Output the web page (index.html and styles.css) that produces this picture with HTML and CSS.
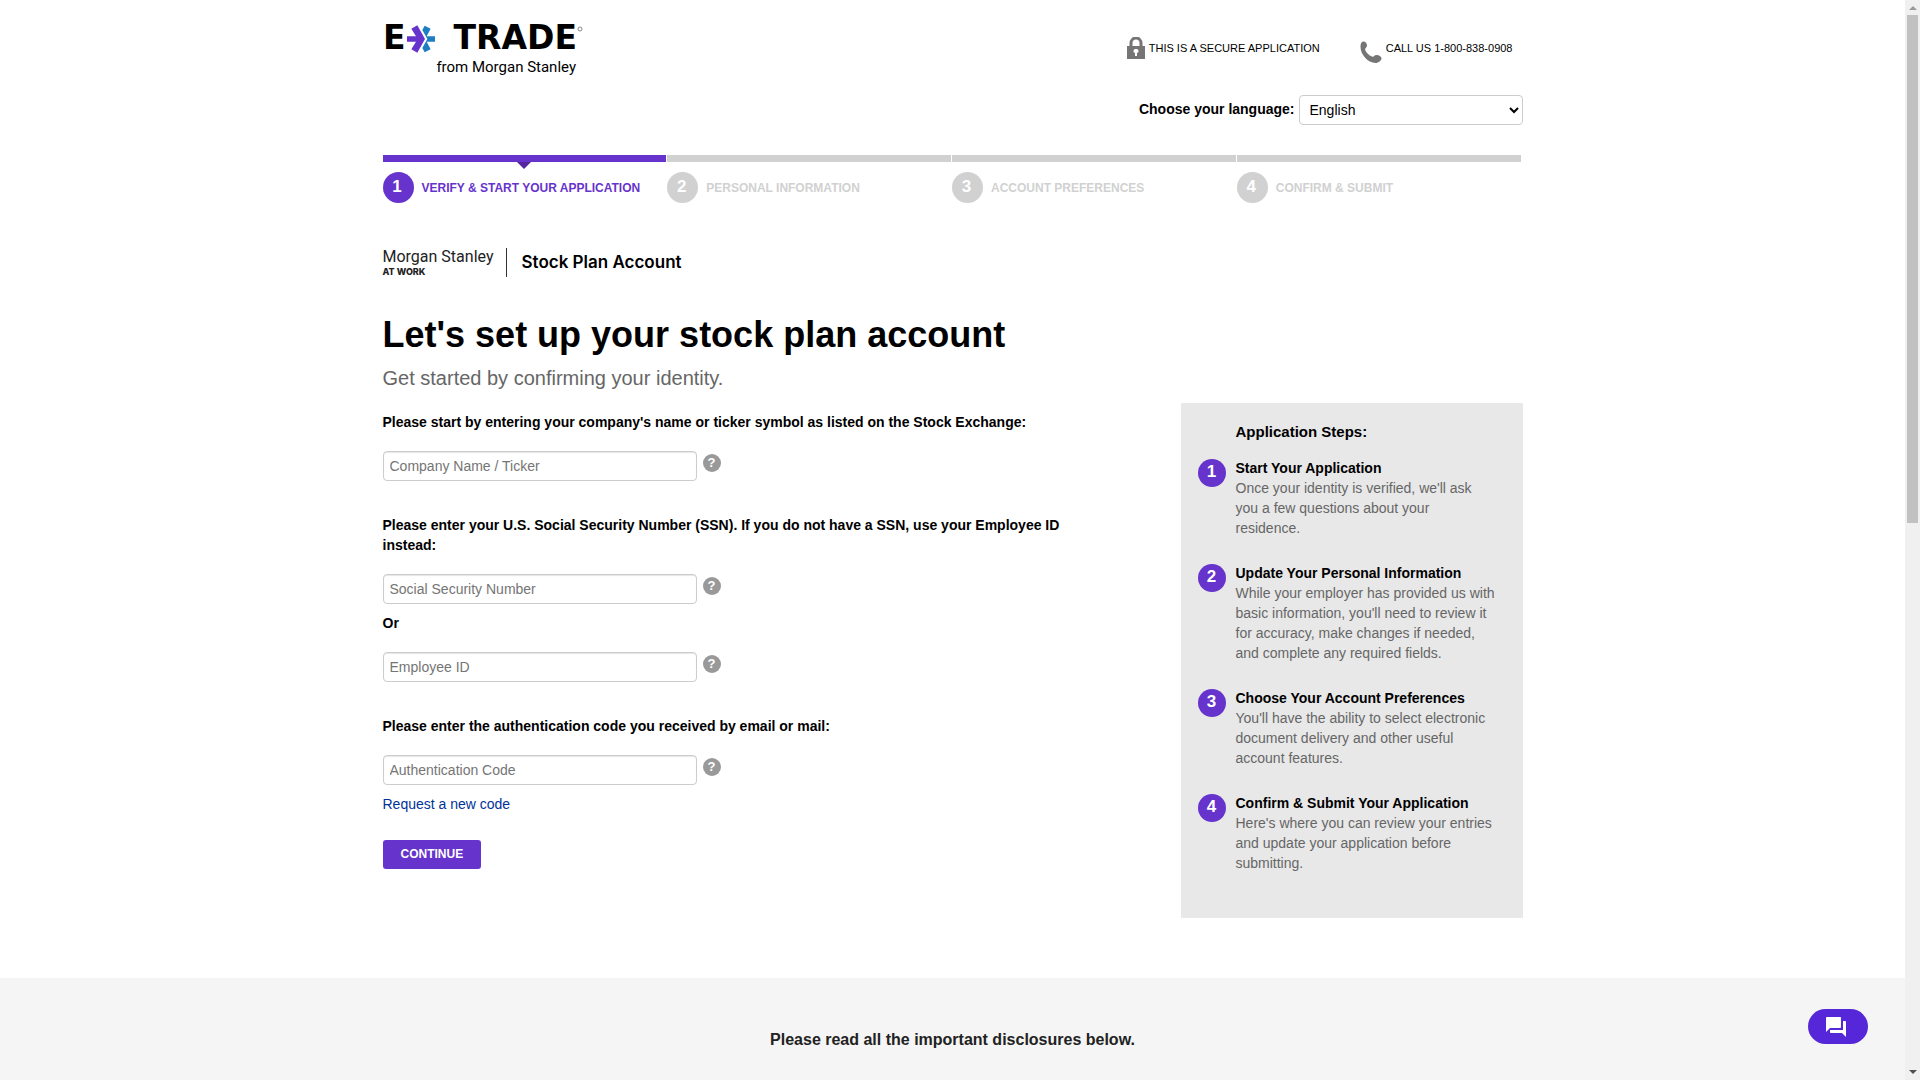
FILE: index.html
```
<!DOCTYPE html>
<html lang="en">
<head>
  <meta charset="UTF-8" />
  <meta name="viewport" content="width=device-width, initial-scale=1.0"/>
  <title>Stock Plan Account - E*TRADE from Morgan Stanley</title>
  <link rel="stylesheet" href="styles.css">
</head>
<body>
  <div class="page">
    <div class="container">
      <header class="header">
        <a class="logo" href="#" aria-label="E*TRADE from Morgan Stanley">
          <svg width="206" height="67" viewBox="0 -13 206 67">
            <text class="logo-word" x="0" y="26">E</text>
            <svg x="24" y="2" width="28" height="28" viewBox="0 0 84 82">
              <path fill="#6633cc" d="M13 10 31 0 54 41 31 82 13 72 27 49H0V33H27Z"/>
              <path fill="#1c7fc4" d="M53 1 71 10 59 33H84V49H59L71 72 53 81 46 68 61 41 46 14Z"/>
            </svg>
            <text class="logo-word" x="194" y="26" text-anchor="end">TRADE</text>
            <circle cx="197" cy="6" r="2" fill="none" stroke="#888"/>
            <text class="logo-from" x="193" y="49" text-anchor="end">from Morgan Stanley</text>
          </svg>
        </a>
        <div class="header-right">
          <div class="header-info">
            <span class="info-item">
              <svg width="18" height="22" viewBox="0 0 18 22">
                <path fill="none" stroke="#757575" stroke-width="3" d="M4 10V6a5 5 0 0 1 10 0v4"/>
                <rect y="9" width="18" height="13" fill="#757575"/>
                <path fill="#fff" d="M9 12a2 2 0 0 1 1 4v3H8v-3a2 2 0 0 1 1-4Z"/>
              </svg>
              THIS IS A SECURE APPLICATION
            </span>
            <a class="info-item info-phone" href="tel:18008380908">
              <svg width="22" height="22" viewBox="0 0 22 22">
                <path fill="#757575" d="M3 .5C5 0 7 2 7 4.500c0 2-2 2.500-2 4 1 3 4 6 7 7 2 1 2-1.500 4.500-1.500 3 0 5 2 5 3.500 0 2-3 4.500-6 4.500C8 22 .5 13.500.5 6 .5 3 1 1 3 .5Z"/>
              </svg>
              CALL US 1-800-838-0908
            </a>
          </div>
          <div class="language">
            <label for="language">Choose your language:</label>
            <select id="language" name="language">
              <option>English</option>
            </select>
          </div>
        </div>
      </header>

      <ol class="progress">
        <li class="active"><span class="num">1</span>VERIFY &amp; START YOUR APPLICATION</li>
        <li><span class="num">2</span>PERSONAL INFORMATION</li>
        <li><span class="num">3</span>ACCOUNT PREFERENCES</li>
        <li><span class="num">4</span>CONFIRM &amp; SUBMIT</li>
      </ol>

      <div class="brand">
        <div class="brand-ms">
          <span class="brand-name">Morgan Stanley</span>
          <span class="brand-sub">AT WORK</span>
        </div>
        <div class="brand-product">Stock Plan Account</div>
      </div>

      <h1>Let's set up your stock plan account</h1>
      <p class="subtitle">Get started by confirming your identity.</p>

      <main class="content">
        <form class="form" id="verifyForm" action="#" method="POST">
          <div class="field">
            <label for="company">Please start by entering your company's name or ticker symbol as listed on the Stock Exchange:</label>
            <div class="input-row">
              <input type="text" id="company" name="company" placeholder="Company Name / Ticker" />
              <button type="button" class="help" aria-label="Help with company name">?</button>
            </div>
          </div>

          <div class="field field-or">
            <label for="ssn">Please enter your U.S. Social Security Number (SSN). If you do not have a SSN, use your Employee ID instead:</label>
            <div class="input-row">
              <input type="text" id="ssn" name="ssn" placeholder="Social Security Number" />
              <button type="button" class="help" aria-label="Help with SSN">?</button>
            </div>
          </div>

          <div class="field">
            <label for="employeeId">Or</label>
            <div class="input-row">
              <input type="text" id="employeeId" name="employeeId" placeholder="Employee ID" />
              <button type="button" class="help" aria-label="Help with employee ID">?</button>
            </div>
          </div>

          <div class="field field-last">
            <label for="authCode">Please enter the authentication code you received by email or mail:</label>
            <div class="input-row">
              <input type="text" id="authCode" name="authCode" placeholder="Authentication Code" />
              <button type="button" class="help" aria-label="Help with authentication code">?</button>
            </div>
            <a class="request-link" href="#">Request a new code</a>
          </div>

          <button type="submit" class="continue">CONTINUE</button>
        </form>

        <aside class="steps">
          <h2>Application Steps:</h2>
          <div class="step">
            <span class="num">1</span>
            <div>
              <h3>Start Your Application</h3>
              <p>Once your identity is verified, we'll ask you a few questions about your residence.</p>
            </div>
          </div>
          <div class="step">
            <span class="num">2</span>
            <div>
              <h3>Update Your Personal Information</h3>
              <p>While your employer has provided us with basic information, you'll need to review it for accuracy, make changes if needed, and complete any required fields.</p>
            </div>
          </div>
          <div class="step">
            <span class="num">3</span>
            <div>
              <h3>Choose Your Account Preferences</h3>
              <p>You'll have the ability to select electronic document delivery and other useful account features.</p>
            </div>
          </div>
          <div class="step">
            <span class="num">4</span>
            <div>
              <h3>Confirm &amp; Submit Your Application</h3>
              <p>Here's where you can review your entries and update your application before submitting.</p>
            </div>
          </div>
        </aside>
      </main>
    </div>

    <footer class="footer">
      <p>Please read all the important disclosures below.</p>
    </footer>
  </div>

  <div class="scrollbar" aria-hidden="true">
    <span class="arrow-up"></span>
    <span class="thumb"></span>
    <span class="arrow-down"></span>
  </div>

  <button type="button" class="chat" aria-label="Chat">
    <svg width="24" height="24" viewBox="0 0 24 24" fill="#fff">
      <path d="M21 6h-2v9H6v2c0 .55.45 1 1 1h11l4 4V7c0-.55-.45-1-1-1zm-4 6V3c0-.55-.45-1-1-1H3c-.55 0-1 .45-1 1v14l4-4h10c.55 0 1-.45 1-1z"/>
    </svg>
  </button>
</body>
</html>
```
FILE: styles.css
```
* {
  box-sizing: border-box;
}

body {
  margin: 0;
  height: 100vh;
  display: flex;
  overflow: hidden;
  background: #fff;
  color: #000;
  font-family: Arial, "Liberation Sans", sans-serif;
  font-size: 14px;
  line-height: 20px;
}

h1, h2, h3, p {
  margin: 0;
}

input, select, button {
  font-family: inherit;
  font-size: 14px;
}

.page {
  flex: 1;
  overflow: hidden;
}

.container {
  max-width: 1140px;
  margin: 0 auto;
}

/* header */
.header {
  display: flex;
  justify-content: space-between;
  padding-top: 10px;
}

.logo svg {
  display: block;
  overflow: visible;
}

.logo-word {
  font-family: "DejaVu Sans", sans-serif;
  font-weight: bold;
  font-size: 33px;
}

.logo-from {
  font-family: Roboto, sans-serif;
  font-size: 15px;
}

.header-right {
  padding-top: 27px;
}

.header-info {
  display: flex;
  justify-content: flex-end;
  gap: 40px;
  padding-right: 10px;
}

.info-item {
  display: flex;
  gap: 4px;
  height: 26px;
  font-size: 11px;
  line-height: 22px;
  color: #000;
  text-decoration: none;
}

.info-phone svg {
  margin-top: 4px;
}

.language {
  display: flex;
  justify-content: flex-end;
  gap: 4px;
  margin-top: 32px;
}

.language label {
  font-weight: bold;
  line-height: 28px;
}

.language select {
  width: 224px;
  height: 30px;
  padding: 4px 6px;
  border: 1px solid #ccc;
  border-radius: 4px;
  background: #fff;
  color: #000;
}

/* progress bar */
.progress {
  display: grid;
  grid-template-columns: repeat(4, 1fr);
  gap: 1px;
  list-style: none;
  margin: 30px 2px 0 0;
  padding: 0;
}

.progress li {
  position: relative;
  display: flex;
  align-items: center;
  gap: 8px;
  padding-top: 10px;
  border-top: 7px solid #d1d1d1;
  color: #d1d1d1;
  font-size: 12px;
  font-weight: bold;
}

.progress li.active {
  border-color: #6633cc;
  color: #6633cc;
}

.progress li.active::after {
  content: "";
  position: absolute;
  top: 0;
  left: 50%;
  margin-left: -7px;
  border: 7px solid transparent;
  border-top-color: #5526a0;
  border-bottom: 0;
}

.num {
  flex: none;
  border-radius: 50%;
  background: #6633cc;
  color: #fff;
  font-weight: bold;
  font-size: 17px;
  text-align: center;
}

.progress .num {
  width: 31px;
  height: 31px;
  padding-right: 2px;
  line-height: 29px;
  background: #d1d1d1;
}

.progress .active .num {
  background: #6633cc;
}

/* product branding */
.brand {
  display: flex;
  margin-top: 45px;
}

.brand-ms {
  display: flex;
  flex-direction: column;
  padding-right: 13px;
  border-right: 1px solid #333;
  color: #222;
}

.brand-name {
  font-family: Roboto, sans-serif;
  font-size: 16px;
  line-height: 18px;
}

.brand-sub {
  font-family: Inter, sans-serif;
  font-size: 9px;
  font-weight: 800;
  line-height: 11px;
}

.brand-product {
  padding-left: 14px;
  font-family: Inter, sans-serif;
  font-size: 17px;
  font-weight: 600;
  line-height: 28px;
}

h1 {
  margin-top: 38px;
  font-size: 36px;
  line-height: 40px;
}

.subtitle {
  margin-top: 10px;
  color: #666;
  font-size: 20px;
  line-height: 26px;
}

/* form */
.content {
  display: flex;
  justify-content: space-between;
  align-items: flex-start;
  margin-top: 12px;
}

.form {
  flex: 0 1 690px;
  padding-top: 9px;
}

.field {
  margin-bottom: 34px;
}

.field-or {
  margin-bottom: 9px;
}

.field-last {
  margin-bottom: 26px;
}

.field label {
  display: block;
  margin-bottom: 19px;
  font-weight: bold;
}

.input-row {
  display: flex;
  gap: 6px;
}

.input-row input {
  width: 314px;
  height: 30px;
  padding: 4px 6px;
  border: 1px solid #ccc;
  border-radius: 4px;
  box-shadow: inset 0 1px 1px rgba(0, 0, 0, 0.1);
}

.input-row input::placeholder {
  color: #757575;
}

.help {
  width: 18px;
  height: 18px;
  margin-top: 3px;
  padding: 0;
  border: none;
  border-radius: 50%;
  background: #999;
  color: #fff;
  font-size: 13px;
  font-weight: bold;
  line-height: 18px;
  cursor: pointer;
}

.request-link {
  display: block;
  width: max-content;
  margin-top: 9px;
  color: #003399;
  text-decoration: none;
}

.request-link:hover {
  text-decoration: underline;
}

.continue {
  display: block;
  height: 29px;
  padding: 0 18px 2px;
  border: none;
  border-radius: 3px;
  background: #6633cc;
  color: #fff;
  font-size: 12px;
  font-weight: bold;
  cursor: pointer;
}

/* steps panel */
.steps {
  width: 342px;
  padding: 19px 27px 20px 17px;
  background: #e8e8e8;
}

.steps h2 {
  margin: 0 0 16px 38px;
  font-size: 15px;
  line-height: 20px;
}

.step {
  display: flex;
  gap: 10px;
  margin-bottom: 25px;
}

.step h3 {
  font-size: 14px;
  line-height: 20px;
}

.step p {
  color: #666;
}

.step .num {
  width: 28px;
  height: 28px;
  margin-top: 1px;
  line-height: 26px;
}

/* disclosures */
.footer {
  margin-top: 60px;
  padding: 50px 0;
  background: #f5f5f5;
  color: #222;
  font-size: 16px;
  font-weight: bold;
  line-height: 24px;
  text-align: center;
}

.scrollbar {
  width: 15px;
  display: flex;
  flex-direction: column;
  align-items: center;
  padding: 6px 0;
  background: #f0f0f0;
}

.arrow-up, .arrow-down {
  border: 4px solid transparent;
}

.arrow-up {
  border-top: 0;
  border-bottom-color: #999;
}

.arrow-down {
  margin-top: auto;
  border-bottom: 0;
  border-top-color: #505050;
}

.thumb {
  width: 11px;
  height: 47vh;
  margin-top: 5px;
  background: #c1c1c1;
}

.chat {
  position: fixed;
  right: 52px;
  bottom: 36px;
  width: 60px;
  height: 35px;
  padding: 6px 16px;
  border: none;
  border-radius: 18px;
  background: #5627d8;
  cursor: pointer;
}

.chat svg {
  display: block;
}
```
